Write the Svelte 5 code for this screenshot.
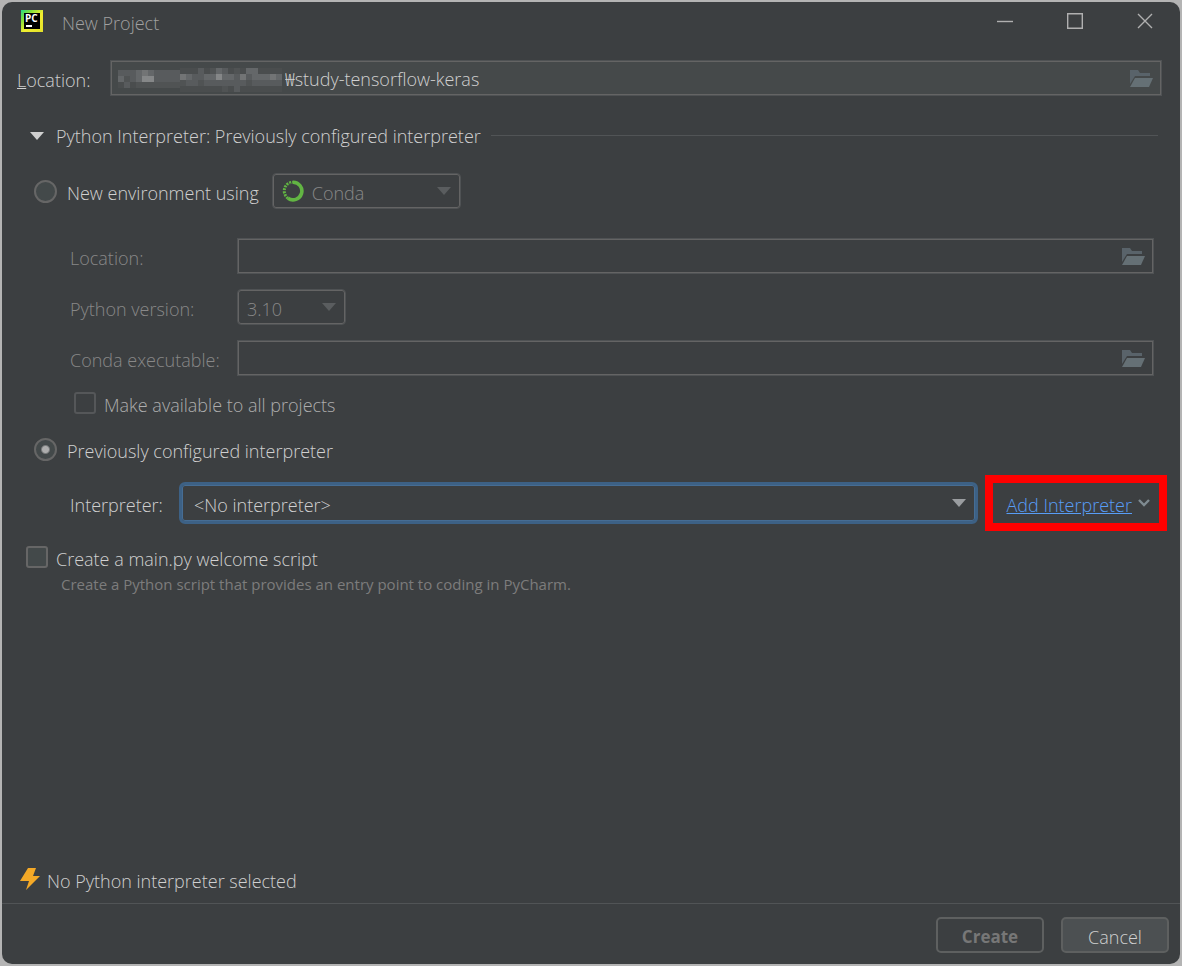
<script lang="ts">
	const versions = ['3.10', '3.9', '3.8'];
	const cell = 6;

	// Shades of the masked part of the path, one digit per cell, row by row
	const shades = ['#4a4d4e', '#505354', '#585b5d', '#646769', '#727475', '#858788'];
	const maskedParts = [
		{ x: 0, y: 2, rows: ['22234322222', '31235522222', '02011111111'] },
		{ x: 62, y: 0, rows: ['00020132010330000', '43223353324233343', '12212222222122222', '00000001020000000'] }
	];

	let location = $state('₩study-tensorflow-keras');
	let mode = $state('existing');
	let welcomeScript = $state(false);
	let shared = $state(false);
</script>

{#snippet folder()}
	<svg width="23" height="17" viewBox="0 0 23 17" aria-hidden="true">
		<path d="M0 0h8l2 3h10v3H5L0 14z" fill="#59636a" />
		<path d="M5 8h18l-4 9H0z" fill="#657075" />
	</svg>
{/snippet}

{#snippet arrow()}
	<svg class="arrow" width="14" height="8" viewBox="0 0 14 8" aria-hidden="true">
		<path d="M0 0h14L7 8z" fill="currentColor" />
	</svg>
{/snippet}

<div class="desktop">
	<div class="window">
		<header class="titlebar">
			<svg width="22" height="22" viewBox="0 0 22 22" aria-hidden="true">
				<defs>
					<linearGradient id="logo-edge" x1="0" y1="0" x2="1" y2="1">
						<stop offset="0" stop-color="#21d789" />
						<stop offset="0.25" stop-color="#7fe03a" />
						<stop offset="0.55" stop-color="#f2ee30" />
						<stop offset="1" stop-color="#e3e02a" />
					</linearGradient>
				</defs>
				<rect width="22" height="22" fill="url(#logo-edge)" />
				<rect x="3" y="3" width="16" height="16" fill="#000" />
				<rect x="5" y="15" width="6" height="2" fill="#fff" />
				<text x="4" y="12" font-size="10" font-weight="700" fill="#fff">PC</text>
			</svg>
			<h1>New Project</h1>
			<div class="window-buttons">
				<button type="button" aria-label="Minimize">
					<svg width="16" height="16" viewBox="0 0 16 16"><path d="M0 8.5h16" /></svg>
				</button>
				<button type="button" aria-label="Maximize">
					<svg width="16" height="16" viewBox="0 0 16 16"><path d="M.7.7h14.6v14.6H.7z" /></svg>
				</button>
				<button type="button" aria-label="Close">
					<svg width="16" height="16" viewBox="0 0 16 16"><path d="M1 1l14 14M15 1L1 15" /></svg>
				</button>
			</div>
		</header>

		<main>
			<div class="row project">
				<label for="location"><u>L</u>ocation:</label>
				<div class="field">
					<svg class="masked" width="167" height="24" viewBox="0 0 167 24" aria-hidden="true">
						{#each maskedParts as part}
							{#each part.rows as row, y}
								{#each row as shade, x}
									<rect
										x={part.x + x * cell}
										y={part.y + y * cell}
										width={cell}
										height={cell}
										fill={shades[+shade]}
									/>
								{/each}
							{/each}
						{/each}
					</svg>
					<input id="location" type="text" bind:value={location} />
					<button type="button" aria-label="Browse">{@render folder()}</button>
				</div>
			</div>

			<h2>
				<button type="button" class="section" aria-expanded="true">
					{@render arrow()}
					<span>Python Interpreter: Previously configured interpreter</span>
				</button>
			</h2>

			<div class="row choice">
				<input id="new" type="radio" value="new" bind:group={mode} />
				<label for="new">New environment using</label>
				<div class="combo conda">
					<svg width="22" height="22" viewBox="0 0 22 22" fill="none" stroke="#62b543" aria-hidden="true">
						<path d="M11 2.2a8.8 8.8 0 1 1-5 16" stroke-width="3.6" />
						<path d="M6 18.2a8.8 8.8 0 0 1 5-16" stroke-width="3" stroke-dasharray="2 1" />
						<path d="M5 16.6a8 8 0 0 1 4-13" stroke="#3c3f41" stroke-width="1" stroke-dasharray="1 2" />
					</svg>
					<select aria-label="Environment type" disabled>
						<option>Conda</option>
					</select>
					{@render arrow()}
				</div>
			</div>

			<div class="environment">
				<label for="env-location">Location:</label>
				<div class="field">
					<input id="env-location" type="text" disabled />
					<button type="button" aria-label="Browse" disabled>{@render folder()}</button>
				</div>
				<label for="version">Python version:</label>
				<div class="combo version">
					<select id="version" disabled>
						{#each versions as version}
							<option>{version}</option>
						{/each}
					</select>
					{@render arrow()}
				</div>
				<label for="executable">Conda executable:</label>
				<div class="field">
					<input id="executable" type="text" disabled />
					<button type="button" aria-label="Browse" disabled>{@render folder()}</button>
				</div>
			</div>

			<div class="row shared">
				<input id="shared" type="checkbox" bind:checked={shared} disabled />
				<label for="shared">Make available to all projects</label>
			</div>

			<div class="row choice">
				<input id="existing" type="radio" value="existing" bind:group={mode} />
				<label for="existing">Previously configured interpreter</label>
			</div>

			<div class="row interpreter">
				<label for="interpreter">Interpreter:</label>
				<div class="combo focused">
					<select id="interpreter">
						<option>&lt;No interpreter&gt;</option>
					</select>
					{@render arrow()}
				</div>
				<div class="highlight">
					<a href="#add">Add Interpreter</a>
					<svg width="12" height="8" viewBox="0 0 12 8" aria-hidden="true">
						<path d="M1 1l5 5 5-5" fill="none" stroke="#7f8b91" stroke-width="2.4" />
					</svg>
				</div>
			</div>

			<div class="row welcome">
				<input id="welcome" type="checkbox" bind:checked={welcomeScript} />
				<label for="welcome">Create a main.py welcome script</label>
			</div>
			<p class="hint">Create a Python script that provides an entry point to coding in PyCharm.</p>
		</main>

		<p class="status">
			<svg width="20" height="22" viewBox="0 0 20 22" aria-hidden="true">
				<path d="M8 0h8l-3 8h7L6 22l3-9H0z" fill="#f4a927" />
			</svg>
			<span>No Python interpreter selected</span>
		</p>

		<footer>
			<button type="button" class="create" disabled>Create</button>
			<button type="button">Cancel</button>
		</footer>
	</div>
</div>

<style>
	:global(body) {
		background: #b4b4b4;
	}

	.desktop {
		box-sizing: border-box;
		height: 100vh;
		padding: 2px;
	}

	.window {
		display: flex;
		flex-direction: column;
		box-sizing: border-box;
		height: 100%;
		border-radius: 10px;
		background: #3c3f41;
		color: #d0d0d0;
		font-family: 'Open Sans', 'Noto Sans CJK KR', sans-serif;
		font-size: 18px;
		font-weight: 300;
		line-height: 24px;
	}

	h1,
	h2,
	p {
		margin: 0;
		font-size: inherit;
		font-weight: inherit;
	}

	button,
	input,
	select {
		margin: 0;
		padding: 0;
		border: 0;
		outline: none;
		background: none;
		color: inherit;
		font: inherit;
	}

	label {
		padding-top: 4px;
		white-space: nowrap;
	}

	svg {
		display: block;
		flex: none;
	}

	.titlebar {
		display: flex;
		align-items: center;
		gap: 19px;
		height: 38px;
		padding: 0 27px 0 19px;
	}

	.titlebar h1 {
		flex: 1;
		padding-top: 4px;
		color: #a0a0a0;
	}

	.window-buttons {
		display: flex;
		gap: 54px;
	}

	.window-buttons path {
		fill: none;
		stroke: #b0b0b0;
		stroke-width: 1.4;
	}

	main {
		flex: 1;
		padding: 20px 19px 0 15px;
	}

	.row {
		display: flex;
		align-items: center;
	}

	.project label {
		width: 93px;
	}

	.field,
	.combo {
		display: flex;
		align-items: center;
		box-sizing: border-box;
		height: 36px;
		border: 1px solid #4f5254;
		box-shadow: inset 0 0 0 1px #646464;
	}

	.field {
		flex: 1;
		padding: 0 8px 0 7px;
	}

	.project .field {
		margin-right: -1px;
		background: #45494a;
	}

	.field input {
		flex: 1;
		min-width: 0;
		padding-top: 2px;
	}

	.masked {
		padding-top: 4px;
	}

	h2 {
		display: flex;
		align-items: center;
		gap: 10px;
		margin: 27px 3px 25px 13px;
	}

	h2::after {
		content: '';
		flex: 1;
		height: 1px;
		background: #515456;
	}

	.section {
		display: flex;
		align-items: center;
		gap: 12px;
	}

	.section span {
		padding-top: 2px;
		line-height: 23px;
	}

	.choice {
		gap: 10px;
		padding-left: 17px;
	}

	.combo {
		border-radius: 4px;
	}

	.combo select {
		flex: 1;
		min-width: 0;
		padding-top: 4px;
		appearance: none;
		opacity: 1;
	}

	.combo .arrow {
		pointer-events: none;
	}

	.conda,
	.version {
		color: #888;
	}

	.conda .arrow,
	.version .arrow {
		color: #5a5d5f;
	}

	.conda {
		width: 189px;
		gap: 8px;
		margin-left: 3px;
		padding: 0 9px;
	}

	.version {
		width: 109px;
		padding: 0 9px;
	}

	.environment {
		display: grid;
		grid-template-columns: 152px 1fr;
		gap: 15px;
		align-items: center;
		margin: 29px 7px 0 53px;
		color: #888;
	}

	input[type='radio'],
	input[type='checkbox'] {
		flex: none;
		appearance: none;
		box-sizing: border-box;
		width: 22px;
		height: 22px;
		padding: 0;
		border: 2px solid #666;
		background: #43494a;
	}

	input[type='radio'] {
		width: 23px;
		height: 23px;
		border-radius: 50%;
	}

	input[type='radio']:checked {
		background: radial-gradient(circle, #adadad 3px, #43494a 5px);
	}

	input[type='checkbox'] {
		border-radius: 3px;
	}

	input[type='checkbox']:disabled {
		border-color: #555759;
		background: none;
	}

	.shared {
		gap: 8px;
		margin: 13px 0 18px;
		padding-left: 57px;
		color: #adadad;
	}

	.interpreter {
		margin: 12px -6px 0 0;
		padding-left: 53px;
	}

	.interpreter label {
		width: 109px;
	}

	.combo.focused {
		flex: 1;
		height: 42px;
		margin-right: 7px;
		padding: 0 9px 0 12px;
		border: 3px solid #3d6185;
		border-radius: 6px;
		box-shadow: inset 0 0 0 1px #466d94;
	}

	.focused .arrow {
		color: #9a9da0;
	}

	.highlight {
		display: flex;
		align-items: center;
		gap: 6px;
		padding: 8px 9px 8px 13px;
		border: 8px solid #f00;
	}

	a {
		color: #589df6;
	}

	.highlight a {
		padding-top: 4px;
		line-height: 20px;
	}

	.welcome {
		gap: 8px;
		margin-top: 12px;
		padding-left: 9px;
	}

	.hint {
		padding: 1px 0 0 44px;
		color: #7c7c7c;
		font-size: 15px;
		font-weight: 400;
	}

	.status {
		display: flex;
		align-items: center;
		gap: 7px;
		padding: 0 18px 10px;
	}

	.status span {
		padding-top: 4px;
	}

	footer {
		display: flex;
		justify-content: flex-end;
		gap: 17px;
		padding: 13px 11px 11px;
		border-top: 1px solid #515456;
	}

	footer button {
		box-sizing: border-box;
		width: 108px;
		height: 36px;
		padding-top: 4px;
		border: 2px solid #5e6060;
		border-radius: 5px;
		background: #4c5052;
	}

	footer .create {
		background: none;
		color: #777;
		font-size: 17px;
		font-weight: 700;
	}
</style>
